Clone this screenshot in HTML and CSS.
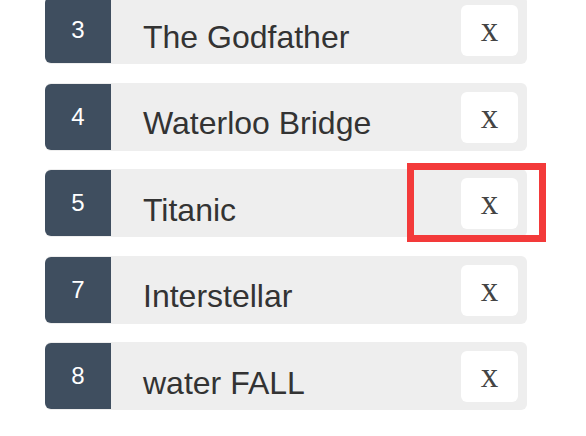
FILE: index.html
```html
<!DOCTYPE html>
<html lang="en">
<head>
    <meta charset="UTF-8">
    <meta name="viewport" content="width=device-width, initial-scale=1.0">
    <title>Movie List</title>
    <link rel="stylesheet" href="styles.css">
</head>
<body>
    <!-- Movie list -->
    <ul class="movie-list">
        <li class="movie-item">
            <span class="movie-id">3</span>
            <span class="movie-title">The Godfather</span>
            <button class="delete-button">x</button>
        </li>
        <li class="movie-item">
            <span class="movie-id">4</span>
            <span class="movie-title">Waterloo Bridge</span>
            <button class="delete-button">x</button>
        </li>
        <li class="movie-item highlighted">
            <span class="movie-id">5</span>
            <span class="movie-title">Titanic</span>
            <button class="delete-button">x</button>
            <div class="highlight-box"></div>
        </li>
        <li class="movie-item">
            <span class="movie-id">7</span>
            <span class="movie-title">Interstellar</span>
            <button class="delete-button">x</button>
        </li>
        <li class="movie-item">
            <span class="movie-id">8</span>
            <span class="movie-title">water FALL</span>
            <button class="delete-button">x</button>
        </li>
    </ul>
</body>
</html>
```

FILE: styles.css
```css
body {
    background-color: #fff;
    margin: 0;
    padding: 0;
    font-family: "Liberation Sans", Arial, sans-serif;
    overflow: hidden;
}

.movie-list {
    list-style: none;
    margin: -4px 0 0 45px;
    padding: 0;
    width: 482px;
    display: flex;
    flex-direction: column;
    gap: 18.5px;
}

.movie-item {
    position: relative;
    height: 68px;
    background: #eeeeee;
    border-radius: 6px;
    display: flex;
    align-items: center;
}

.movie-id {
    width: 66px;
    height: 66px;
    flex-shrink: 0;
    background: #3f4e5f;
    border-radius: 6px 0 0 6px;
    color: #fff;
    font-size: 24px;
    display: flex;
    align-items: center;
    justify-content: center;
}

.movie-title {
    flex: 1;
    padding-left: 32px;
    padding-top: 14px;
    font-size: 32px;
    color: #333;
}

.delete-button {
    width: 57px;
    height: 51px;
    margin: 1px 9px 0 0;
    background: #fff;
    border: none;
    border-radius: 6px;
    color: #444;
    font-family: "Liberation Serif", "Times New Roman", serif;
    font-size: 35px;
    line-height: 1;
    padding: 0 0 2px;
    cursor: pointer;
}

/* annotation frame round the highlighted button */
.highlight-box {
    position: absolute;
    left: 362px;
    top: -6px;
    width: 125px;
    height: 65px;
    border: 7px solid #f33a3a;
}
```
